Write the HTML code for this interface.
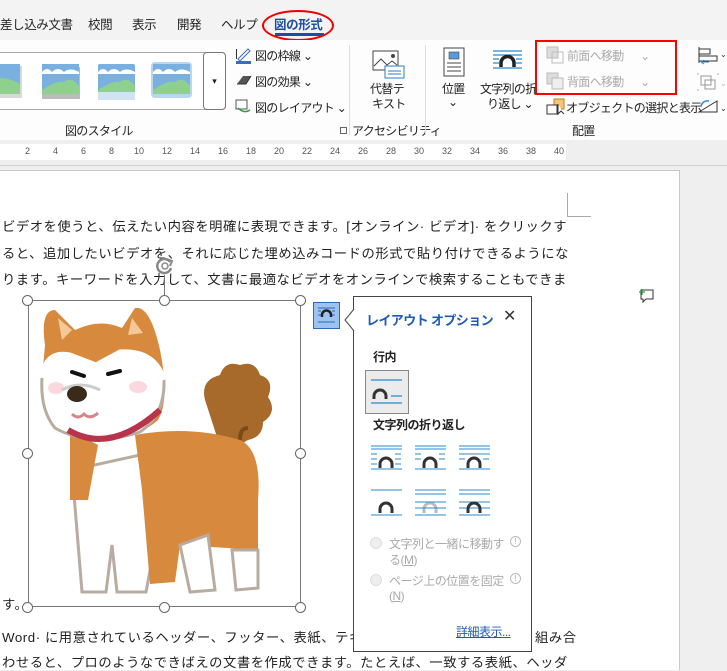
<!DOCTYPE html>
<html><head><meta charset="utf-8"><style>
*{margin:0;padding:0;box-sizing:border-box}
body{width:727px;height:659px;overflow:hidden;background:#efefef;font-family:"Liberation Sans","Noto Sans CJK JP",sans-serif;position:relative;color:#222}
.a{position:absolute;white-space:nowrap}
.t{font-size:12.5px;top:14px;letter-spacing:-0.4px}
.r{font-size:12px;letter-spacing:-0.7px}
.g{color:#aaa}
.doc{font-size:13.3px;color:#222;letter-spacing:0.55px}
.h{position:absolute;width:11px;height:11px;border:1.6px solid #666;border-radius:50%;background:#fff}
.pop{font-size:12px;letter-spacing:-0.5px}
</style></head><body>
<div class="a" style="left:0;top:0;width:727px;height:40px;background:#f3f3f3"></div>
<div class="a t" style="left:0">差し込み文書</div>
<div class="a t" style="left:88px">校閲</div>
<div class="a t" style="left:132px">表示</div>
<div class="a t" style="left:177px">開発</div>
<div class="a t" style="left:221px">ヘルプ</div>
<div class="a t" style="left:274px;color:#1e4e9c;font-weight:bold">図の形式</div>
<div class="a" style="left:275px;top:33px;width:49px;height:3px;background:#1e4e9c"></div>
<div class="a" style="left:262px;top:10px;width:72px;height:31px;border:2px solid #e00;border-radius:50%"></div>
<div class="a" style="left:0;top:40px;width:727px;height:100px;background:#fdfdfd"></div>
<div class="a" style="left:-2px;top:52px;width:228px;height:58px;border:1px solid #aaa;border-radius:0 4px 4px 0;background:#fff"></div>
<div class="a" style="left:203px;top:52px;width:23px;height:58px;border:1px solid #777;border-radius:4px;background:#fff;font-size:9px;text-align:center;line-height:56px">▾</div>
<svg class="a" style="left:0;top:62px" width="200" height="40">
 <g><rect x="-20" y="4" width="42" height="32" fill="#d8d8d8"/><rect x="-20" y="2" width="40" height="30" fill="#7ab0e0"/><path d="M-20 22 Q0 10 20 22 V32 H-20Z" fill="#8fd08f"/></g>
 <g transform="translate(42 0)"><rect x="0" y="5" width="38" height="32" fill="#bbb"/><rect x="0" y="2" width="37" height="30" fill="#7ab0e0"/><path d="M0 10 q5 -6 10 0 q6 -6 12 0 q6 -5 15 0 V12 H0Z" fill="#fff"/><path d="M0 28 Q15 18 22 20 Q30 14 37 24 V32 H0Z" fill="#8fd08f"/></g>
 <g transform="translate(98 0)"><rect x="0" y="26" width="37" height="12" fill="#cfe3f5"/><rect x="0" y="2" width="37" height="28" rx="2" fill="#7ab0e0"/><path d="M0 10 q5 -6 10 0 q6 -6 12 0 q6 -5 15 0 V12 H0Z" fill="#fff"/><path d="M0 28 Q15 18 22 20 Q30 14 37 24 V30 H0Z" fill="#8fd08f"/></g>
 <g transform="translate(153 0)"><rect x="-2" y="0" width="41" height="36" rx="4" fill="#b8d6f0"/><rect x="0" y="2" width="37" height="30" fill="#7ab0e0"/><path d="M0 10 q5 -6 10 0 q6 -6 12 0 q6 -5 15 0 V12 H0Z" fill="#fff"/><path d="M0 28 Q15 18 22 20 Q30 14 37 24 V32 H0Z" fill="#8fd08f"/></g>
</svg>
<svg class="a" style="left:234px;top:46px" width="20" height="70">
 <rect x="2" y="15" width="15" height="3" fill="#3a6cc0"/><path d="M4 13 L14 3 L16 5 L6 15Z" fill="none" stroke="#3a6cc0"/><rect x="2" y="3" width="1" height="10" fill="#333"/>
 <path d="M3 38 L9 30 H17 L12 38Z" fill="#555"/><path d="M3 38 h9 l5 -8" fill="none" stroke="#333"/>
 <rect x="2" y="54" width="11" height="9" fill="none" stroke="#555"/><path d="M4 62 q6 6 12 2" fill="none" stroke="#2a9a3a" stroke-width="1.5"/>
</svg>
<div class="a r" style="left:255px;top:47px">図の枠線 ⌄</div>
<div class="a r" style="left:255px;top:73px">図の効果 ⌄</div>
<div class="a r" style="left:255px;top:99px">図のレイアウト ⌄</div>
<div class="a r" style="left:65px;top:122px">図のスタイル</div>
<div class="a" style="left:340px;top:127px;width:7px;height:7px;border:1px solid #666"></div>
<div class="a" style="left:349px;top:45px;width:1px;height:90px;background:#ddd"></div>
<svg class="a" style="left:372px;top:50px" width="34" height="30"><path d="M1 1 H26 V20 H1Z" fill="#fff" stroke="#444"/><path d="M2 16 L9 9 L15 15 L20 11 L25 15" fill="none" stroke="#444"/><circle cx="21" cy="6" r="2" fill="#444"/><rect x="13" y="16" width="19" height="12" fill="#fff" stroke="#2a7ad0"/><path d="M16 21 h13 M16 24 h13" stroke="#2a7ad0"/></svg>
<div class="a r" style="left:370px;top:80px">代替テ</div>
<div class="a r" style="left:372px;top:95px">キスト</div>
<div class="a r" style="left:352px;top:122px">アクセシビリティ</div>
<div class="a" style="left:425px;top:45px;width:1px;height:90px;background:#ddd"></div>
<svg class="a" style="left:443px;top:47px" width="22" height="30"><rect x="1" y="1" width="20" height="28" fill="#fff" stroke="#444"/><rect x="6" y="5" width="10" height="7" fill="#5a9ad8" stroke="#444" stroke-width=".6"/><path d="M4 16h14M4 20h14M4 24h14" stroke="#444"/></svg>
<div class="a r" style="left:442px;top:80px">位置</div>
<div class="a r" style="left:448px;top:95px">⌄</div>
<svg class="a" style="left:493px;top:49px" width="30" height="22"><path d="M0 2h29M0 6h29M0 10h6M23 10h6M0 14h6M23 14h6M0 19h29" stroke="#2a8ad0" stroke-width="1.2"/><path d="M8 18 v-4 a6.5 6.5 0 0 1 13 0 v4" fill="none" stroke="#222" stroke-width="3.5"/></svg>
<div class="a r" style="left:480px;top:80px">文字列の折</div>
<div class="a r" style="left:487px;top:95px">り返し ⌄</div>
<div class="a" style="left:535px;top:40px;width:142px;height:55px;border:2px solid #f00"></div>
<svg class="a" style="left:546px;top:46px" width="20" height="46"><rect x="1" y="1" width="11" height="11" fill="#ddd" stroke="#bbb"/><rect x="6" y="6" width="11" height="11" fill="none" stroke="#bbb"/><rect x="1" y="27" width="11" height="11" fill="#ddd" stroke="#bbb"/><rect x="6" y="32" width="11" height="11" fill="#eee" stroke="#bbb"/></svg>
<div class="a r g" style="left:567px;top:47px">前面へ移動 <span style="margin-left:14px">⌄</span></div>
<div class="a r g" style="left:567px;top:73px">背面へ移動 <span style="margin-left:14px">⌄</span></div>
<svg class="a" style="left:546px;top:98px" width="22" height="18"><rect x="8" y="1" width="10" height="10" fill="#f5c67a" stroke="#c08020"/><rect x="1" y="7" width="10" height="9" fill="#fff" stroke="#333"/><path d="M12 6 l0 10 l3 -3 l3 3" fill="#fff" stroke="#333"/></svg>
<div class="a r" style="left:566px;top:99px">オブジェクトの選択と表示</div>
<div class="a r" style="left:572px;top:122px">配置</div>
<svg class="a" style="left:697px;top:46px" width="30" height="70"><path d="M2 1v16M2 3h11v5H2M2 10h18v5H2" fill="none" stroke="#333"/><path d="M4 16h8M4 16l3-2M4 16l3 2" stroke="#2a8ad0"/><text x="23" y="11" font-size="8" fill="#333">⌄</text>
<rect x="4" y="30" width="10" height="9" fill="none" stroke="#999"/><rect x="8" y="34" width="10" height="9" fill="none" stroke="#999"/><path d="M1 27v3M1 45v-3M21 27v3" stroke="#aaa" stroke-dasharray="2 2"/><text x="23" y="40" font-size="8" fill="#bbb">⌄</text>
<path d="M2 66 L20 55 V66Z" fill="none" stroke="#333"/><path d="M4 60 q2 -6 8 -5" fill="none" stroke="#2a8ad0" stroke-width="1.5"/><text x="23" y="65" font-size="8" fill="#333">⌄</text></svg>
<div class="a" style="left:0;top:140px;width:727px;height:26px;background:#efefef"></div>
<div class="a" style="left:0;top:144px;width:566px;height:16px;background:#fff"></div>
<div class="a" style="left:0;top:165px;width:727px;height:1px;background:#d0d0d0"></div>
<div class="a" style="left:0;top:145px;font-size:9px;color:#555;width:600px;height:14px" id="ru"></div>
<div class="a" style="left:0;top:170px;width:680px;height:500px;background:#fff;border-right:1px solid #c8c8c8;border-top:1px solid #c8c8c8"></div>
<div class="a" style="left:567px;top:193px;width:24px;height:24px;border-left:1px solid #aaa;border-bottom:1px solid #aaa"></div>
<div class="a doc" style="left:2px;top:216px">ビデオを使うと、伝えたい内容を明確に表現できます。[オンライン· ビデオ]· をクリックす</div>
<div class="a doc" style="left:2px;top:243px">ると、追加したいビデオを、それに応じた埋め込みコードの形式で貼り付けできるようにな</div>
<div class="a doc" style="left:2px;top:269px">ります。キーワードを入力して、文書に最適なビデオをオンラインで検索することもできま</div>
<div class="a doc" style="left:2px;top:594px">す。</div>
<div class="a doc" style="left:2px;top:627px">Word· に用意されているヘッダー、フッター、表紙、テキ</div>
<div class="a doc" style="left:535px;top:627px">組み合</div>
<div class="a doc" style="left:2px;top:652px">わせると、プロのようなできばえの文書を作成できます。たとえば、一致する表紙、ヘッダ</div>
<svg class="a" style="left:638px;top:288px" width="18" height="16"><path d="M3 2h12v9H8l-3 3v-3H3Z" fill="#fff" stroke="#333"/><path d="M1 4h6M4 1v6" stroke="#2a9a3a" stroke-width="1.3"/></svg>
<div class="a" style="left:28px;top:300px;width:273px;height:307px;border:1px solid #777"></div>
<div class="a" style="left:164px;top:275px;width:1px;height:25px;background:#777"></div>
<svg class="a" style="left:155px;top:256px" width="20" height="20"><path d="M15 6 A7 7 0 1 0 16 12" fill="none" stroke="#888" stroke-width="2.5"/><path d="M12 3 l5 2 -2 5" fill="none" stroke="#888" stroke-width="2"/><circle cx="10" cy="10" r="3" fill="none" stroke="#888" stroke-width="1.5"/></svg>
<svg class="a" style="left:28px;top:300px" width="273" height="307" viewBox="28 300 273 307">
 <path d="M205 400 q-5 -20 15 -25 q5 -15 20 -10 q15 -5 20 10 q15 5 8 22 q10 15 -5 25 q0 15 -15 18 q-15 10 -30 0 Z" fill="#a86a2a"/>
 <path d="M240 440 q0 -12 8 -12" fill="none" stroke="#7a4a1a" stroke-width="4"/>
 <path d="M72 470 L140 455 L152 560 L146 592 L117 592 L112 545 L106 592 L82 592 Z" fill="#fff" stroke="#b8aca0" stroke-width="3"/>
 <path d="M70 430 L98 445 L88 500 L70 500Z" fill="#d78a3e"/>
 <path d="M135 435 Q190 425 240 440 Q262 450 258 500 L258 550 L180 545 L175 582 L150 584 L142 490 Z" fill="#d78a3e"/>
 <path d="M180 545 L208 535 L215 590 L190 592 Z" fill="#fff" stroke="#b8aca0" stroke-width="3"/>
 <path d="M232 550 L258 550 L258 588 L236 590Z" fill="#fff" stroke="#b8aca0" stroke-width="3"/>
 <path d="M45 345 Q40 310 55 310 L75 330 Q100 318 122 328 L135 308 Q150 305 160 350 Q170 400 158 420 Q130 445 80 440 Q45 430 42 380Z" fill="#d78a3e"/>
 <path d="M58 318 L72 330 L62 340Z" fill="#f5c89a"/><path d="M132 318 L143 333 L128 335Z" fill="#f5c89a"/>
 <path d="M42 378 Q45 350 70 355 L96 365 L120 352 Q155 350 164 380 Q165 415 140 432 Q90 448 55 428 Q40 410 42 378Z" fill="#fff" stroke="#b8aca0" stroke-width="3"/>
 <path d="M42 378 Q45 350 70 355 L96 365 L120 352 Q155 350 164 380" fill="none" stroke="#fff" stroke-width="5"/>
 <path d="M68 430 Q110 455 160 410" fill="none" stroke="#b8344a" stroke-width="6"/>
 <ellipse cx="56" cy="388" rx="8" ry="6" fill="#fbd8de"/><ellipse cx="138" cy="387" rx="9" ry="6" fill="#fbd8de"/>
 <path d="M72 372 l12 4 M108 374 l12 -3" stroke="#111" stroke-width="4" stroke-linecap="round"/>
 <path d="M62 390 Q80 380 100 390" fill="none" stroke="#ccc" stroke-width="3"/>
 <ellipse cx="77" cy="394" rx="10" ry="8" fill="#3a2a1a"/>
 <path d="M72 414 q6 6 12 0 q6 6 14 -1" fill="none" stroke="#d9848a" stroke-width="3"/>
</svg>
<div class="h" style="left:22px;top:295px"></div><div class="h" style="left:159px;top:295px"></div><div class="h" style="left:295px;top:295px"></div>
<div class="h" style="left:22px;top:448px"></div><div class="h" style="left:295px;top:448px"></div>
<div class="h" style="left:22px;top:602px"></div><div class="h" style="left:159px;top:602px"></div><div class="h" style="left:295px;top:602px"></div>
<svg class="a" style="left:313px;top:302px" width="28" height="28"><rect x=".5" y=".5" width="26" height="26" fill="#9ec3ee" stroke="#2a6ac0"/><path d="M5 6h17M5 9h3M19 9h3M5 13h3M19 13h3M5 20h17" stroke="#2a6ac0"/><path d="M9 15v-2a4.5 4.5 0 0 1 9 0v2" fill="none" stroke="#222" stroke-width="2.5"/></svg>
<div class="a" style="left:353px;top:296px;width:179px;height:356px;background:#fff;border:1px solid #444"></div>
<svg class="a" style="left:344px;top:309px" width="11" height="22"><path d="M10 0 L1 11 L10 22" fill="#fff" stroke="#444"/></svg>
<div class="a" style="left:366px;top:310px;font-size:13px;font-weight:bold;color:#1e5cb3;letter-spacing:-0.6px">レイアウト オプション</div>
<div class="a" style="left:503px;top:306px;font-size:16px;color:#333">✕</div>
<div class="a pop" style="left:373px;top:348px;font-weight:bold">行内</div>
<svg class="a" style="left:365px;top:370px" width="44" height="44"><rect x=".5" y=".5" width="43" height="43" fill="#ebebeb" stroke="#888"/><path d="M6 10h31M6 33h31M26 26h11" stroke="#2a8ad0" stroke-width="1.2"/><path d="M9 29v-3a6 6 0 0 1 12 0v3" fill="none" stroke="#333" stroke-width="3"/></svg>
<div class="a pop" style="left:373px;top:416px;font-weight:bold">文字列の折り返し</div>
<svg class="a" style="left:370px;top:445px" width="125" height="72">
 <defs><g id="ar"><path d="M9 26v-4a6 6 0 0 1 12 0v4" fill="none" stroke="#333" stroke-width="3"/></g></defs>
 <path d="M1 1h31M1 4h31M1 9h6M25 9h6M1 14h6M25 14h6M1 19h6M25 19h6M1 24h31" stroke="#2a8ad0"/><g transform="translate(1,-3)"><use href="#ar"/></g>
 <g transform="translate(44 0)"><path d="M1 1h31M1 4h31M1 9h6M25 9h6M1 14h6M25 14h6M1 24h31" stroke="#2a8ad0"/><g transform="translate(1,-3)"><use href="#ar"/></g></g>
 <g transform="translate(88 0)"><path d="M1 1h31M1 4h31M1 9h31M1 14h6M25 14h6M1 24h31" stroke="#2a8ad0"/><g transform="translate(1,-3)"><use href="#ar"/></g></g>
 <g transform="translate(0 44)"><path d="M1 1h31M1 26h31" stroke="#2a8ad0"/><g transform="translate(1,-2)"><use href="#ar"/></g></g>
 <g transform="translate(44 44)"><path d="M9 24v-4a6 6 0 0 1 12 0v4" fill="none" stroke="#bbb" stroke-width="3" transform="translate(1,0)"/><path d="M1 1h31M1 5h31M1 13h31M1 19h31M1 26h31" stroke="#2a8ad0"/></g>
 <g transform="translate(88 44)"><path d="M1 1h31M1 5h31M1 13h31M1 19h31M1 26h31" stroke="#2a8ad0"/><path d="M10 24v-4a6 6 0 0 1 12 0v4" fill="none" stroke="#333" stroke-width="3"/></g>
</svg>
<div class="a" style="left:370px;top:537px;width:12px;height:12px;border-radius:50%;background:#eee;border:1px solid #ddd"></div>
<div class="a pop g" style="left:389px;top:535px">文字列と一緒に移動す</div>
<div class="a pop g" style="left:389px;top:551px">る(<u>M</u>)</div>
<div class="a" style="left:510px;top:536px;width:11px;height:11px;border-radius:50%;border:1px solid #bbb;font-size:8px;color:#aaa;text-align:center;line-height:9px">!</div>
<div class="a" style="left:370px;top:574px;width:12px;height:12px;border-radius:50%;background:#eee;border:1px solid #ddd"></div>
<div class="a pop g" style="left:389px;top:572px">ページ上の位置を固定</div>
<div class="a pop g" style="left:389px;top:589px">(<u>N</u>)</div>
<div class="a" style="left:510px;top:573px;width:11px;height:11px;border-radius:50%;border:1px solid #bbb;font-size:8px;color:#aaa;text-align:center;line-height:9px">!</div>
<div class="a pop" style="left:456px;top:623px;color:#1e5cb3;text-decoration:underline">詳細表示...</div>
<script>
var r=document.getElementById('ru'),h='';
for(var n=2;n<=40;n+=2){var x=27+(n/2-1)*28;h+='<span style="position:absolute;left:'+(x-(n>=10?5:2))+'px;top:1px">'+n+'</span>';}
r.innerHTML=h;
</script>
</body></html>
